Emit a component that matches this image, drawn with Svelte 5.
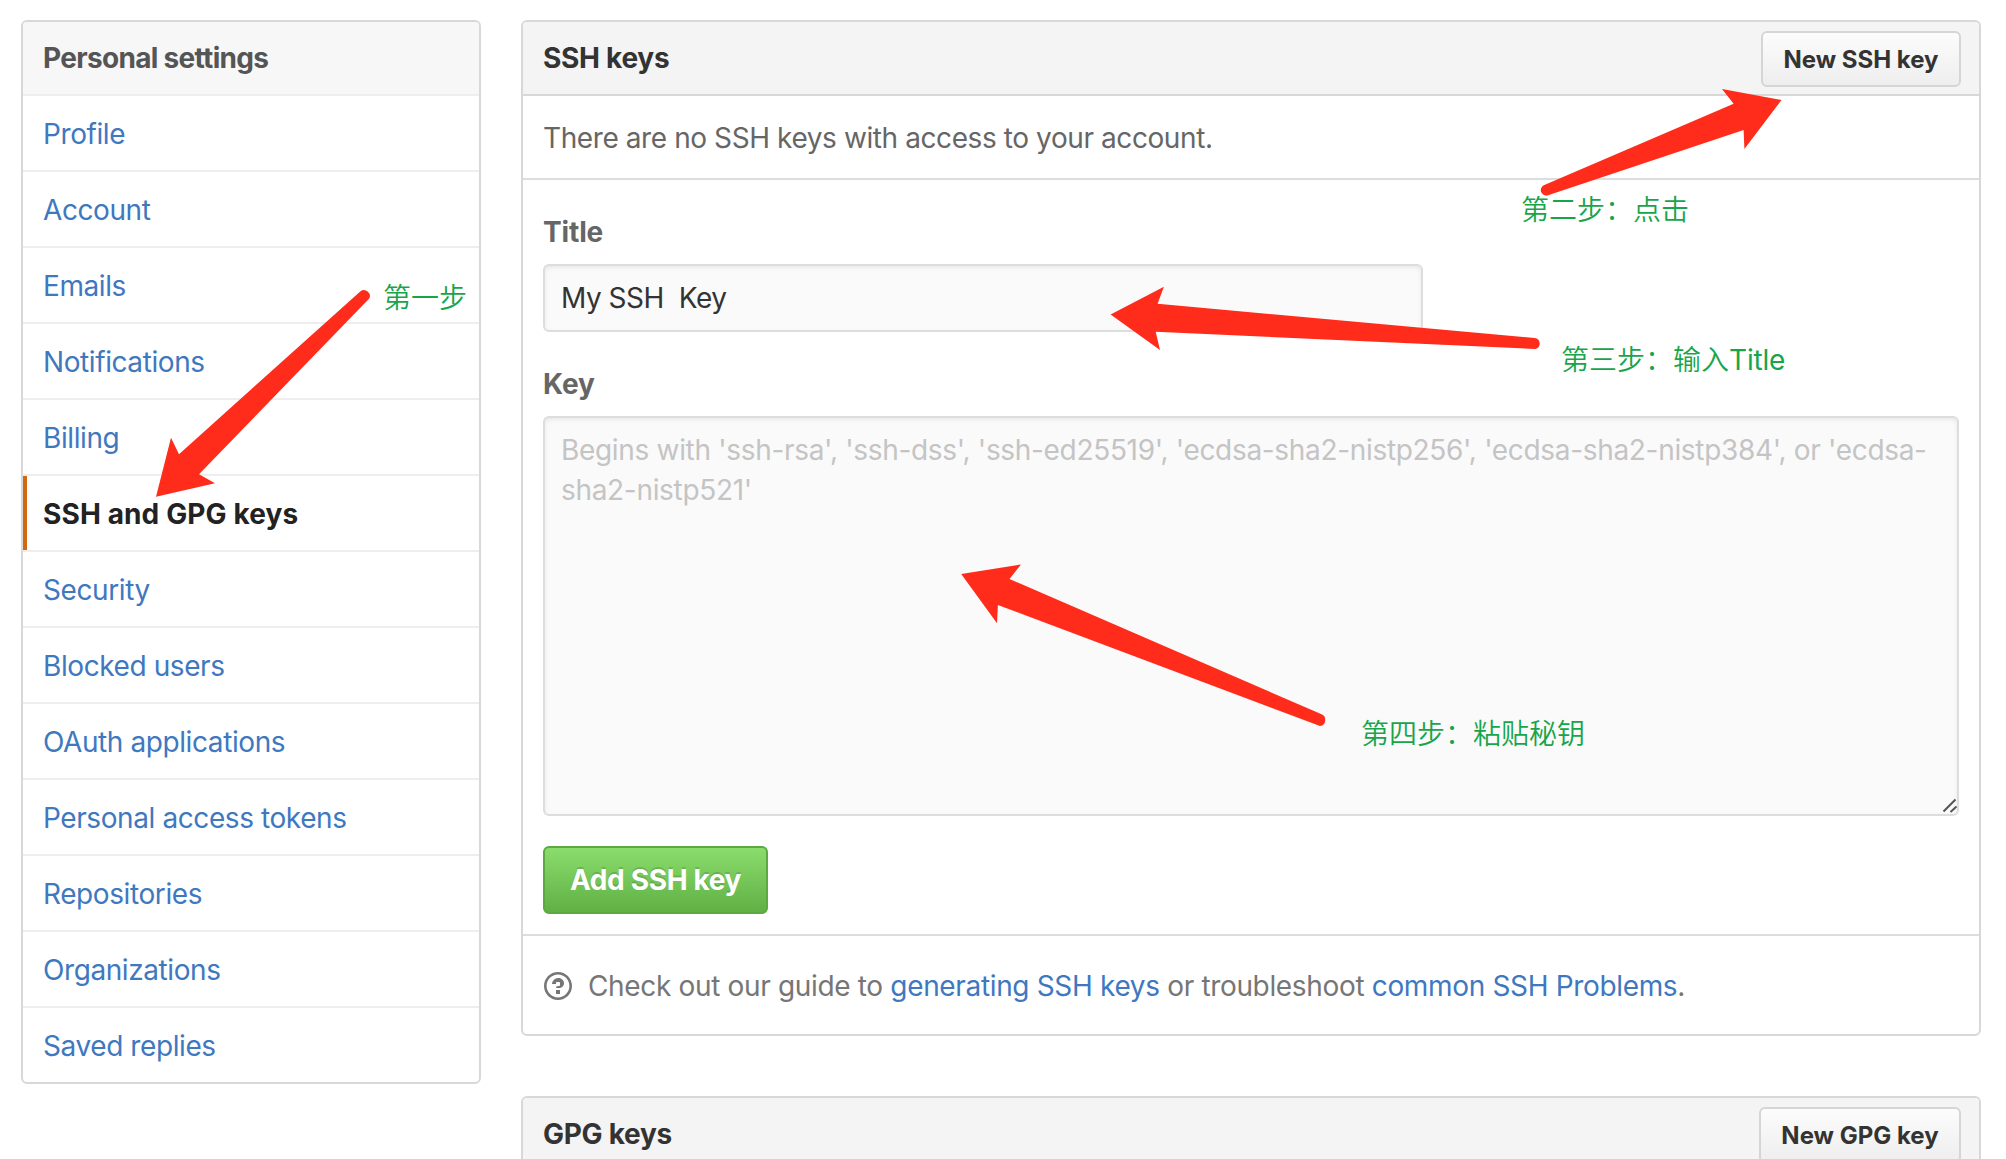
<script>
  const links = [
    'Profile',
    'Account',
    'Emails',
    'Notifications',
    'Billing',
    'SSH and GPG keys',
    'Security',
    'Blocked users',
    'OAuth applications',
    'Personal access tokens',
    'Repositories',
    'Organizations',
    'Saved replies'
  ];
  const current = 'SSH and GPG keys';

  let title = $state('My SSH  Key');
  let key = $state('');

  const arrows = [
    'M156 496.7 L171 437.7 L179 454.2 L360.5 291.2 A6 6 0 0 1 369.3 298.6 L199 474.3 L215 483.3 Z',
    'M1781.5 100 L1722 89 L1733.6 103.7 L1543.8 185.2 A5.5 5.5 0 0 0 1548.8 195 L1743.6 130 L1744.4 149 Z',
    'M1110.6 314.4 L1163.9 286.7 L1157.6 303.8 L1534.5 338 A5.6 5.6 0 0 1 1535.5 349 L1155.7 331.8 L1160 350 Z',
    'M961.2 574 L1021 564.4 L1009.5 579 L1321 714 A6.2 6.2 0 0 1 1320 726 L997.9 605 L997 623.3 Z'
  ];
</script>

<div class="page">
  <nav class="menu">
    <h3 class="menu-heading">Personal settings</h3>
    {#each links as link}
      <a class="menu-item" class:selected={link === current} href="#top">{link}</a>
    {/each}
  </nav>

  <main class="content">
    <section class="box">
      <header class="box-header">
        <h3>SSH keys</h3>
        <button class="btn btn-sm" type="button">New SSH key</button>
      </header>
      <p class="blank">There are no SSH keys with access to your account.</p>
      <form class="form">
        <label class="title-label" for="title">Title</label>
        <input id="title" type="text" bind:value={title} />
        <label class="key-label" for="key">Key</label>
        <div class="key-wrap">
          <textarea
            id="key"
            bind:value={key}
            placeholder="Begins with 'ssh-rsa', 'ssh-dss', 'ssh-ed25519', 'ecdsa-sha2-nistp256', 'ecdsa-sha2-nistp384', or 'ecdsa-sha2-nistp521'"
          ></textarea>
          <svg class="grip" viewBox="0 0 16 16" aria-hidden="true">
            <path d="M1.5 13.5 L13.5 1.5 M8.5 14 L14.5 8.5" />
          </svg>
        </div>
        <button class="btn btn-primary" type="button">Add SSH key</button>
      </form>
      <footer class="help">
        <svg class="question" viewBox="0 0 14 16" aria-hidden="true">
          <path
            fill-rule="evenodd"
            d="M6 10h2v2H6v-2zm4-3.5C10 8.64 8 9 8 9H6c0-.55.45-1 1-1h.5c.28 0 .5-.22.5-.5v-1c0-.28-.22-.5-.5-.5h-1c-.28 0-.5.22-.5.5V7H4c0-1.5 1.5-3 3-3s3 1 3 2.500zM7 2.300c3.140 0 5.700 2.560 5.700 5.700s-2.560 5.700-5.700 5.700A5.710 5.710 0 0 1 1.300 8c0-3.140 2.560-5.700 5.700-5.700zM7 1C3.140 1 0 4.140 0 8s3.140 7 7 7 7-3.140 7-7-3.140-7-7-7z"
          />
        </svg>
        <p>
          Check out our guide to <a href="#top">generating SSH keys</a> or troubleshoot
          <a href="#top">common SSH Problems</a>.
        </p>
      </footer>
    </section>

    <section class="box">
      <header class="box-header">
        <h3>GPG keys</h3>
        <button class="btn btn-sm btn-gpg" type="button">New GPG key</button>
      </header>
    </section>
  </main>

  <svg class="arrows" viewBox="0 0 2006 1159" aria-hidden="true">
    {#each arrows as d}
      <path {d} />
    {/each}
  </svg>
  <span class="note step-1">第一步</span>
  <span class="note step-2">第二步：点击</span>
  <span class="note step-3">第三步：输入<span class="latin">Title</span></span>
  <span class="note step-4">第四步：粘贴秘钥</span>
</div>

<style>
  :global(body) {
    margin: 0;
    background: #fff;
  }

  .page {
    position: relative;
    box-sizing: border-box;
    display: flex;
    align-items: flex-start;
    gap: 40px;
    width: 2006px;
    height: 1159px;
    padding: 20px 25px 0 21px;
    overflow: hidden;
    font: 400 28px/40px Inter, "Liberation Sans", sans-serif;
    letter-spacing: -0.41px;
    color: #666;
  }

  h3,
  p {
    margin: 0;
    font-size: inherit;
  }

  a {
    color: #4078c0;
    text-decoration: none;
  }

  .menu {
    box-sizing: border-box;
    flex: none;
    width: 460px;
    border: 2px solid #d8d8d8;
    border-radius: 6px;
    overflow: hidden;
  }

  .menu-heading,
  .menu-item {
    display: block;
    padding: 18px 20px 16px;
    border-bottom: 2px solid #eee;
  }

  .menu-heading {
    padding: 16px 20px;
    background: #f7f7f7;
    color: #555;
    font-weight: 700;
    letter-spacing: -0.69px;
  }

  .menu-item:last-child {
    border-bottom: 0;
  }

  .menu-item.selected {
    box-shadow: inset 4px 0 0 #d26911;
    color: #222;
    font-weight: 700;
    letter-spacing: 0.12px;
  }

  .content {
    flex: 1;
    display: flex;
    flex-direction: column;
    gap: 60px;
  }

  .box {
    border: 2px solid #d8d8d8;
    border-radius: 6px;
  }

  .box-header {
    box-sizing: border-box;
    display: flex;
    align-items: center;
    justify-content: space-between;
    height: 74px;
    padding: 0 18px 0 20px;
    background: #f4f4f4;
    border-bottom: 2px solid #d8d8d8;
    border-radius: 4px 4px 0 0;
  }

  .box-header h3 {
    color: #333;
    font-weight: 680;
    letter-spacing: -0.28px;
  }

  .btn {
    box-sizing: border-box;
    padding: 0;
    font: 650 24px/40px Inter, "Liberation Sans", sans-serif;
    border: 2px solid #d5d5d5;
    border-radius: 6px;
  }

  .btn-sm {
    width: 200px;
    height: 56px;
    margin-top: 2px;
    color: #333;
    letter-spacing: 0;
    background: linear-gradient(#fcfcfc, #eee);
    padding-top: 1px;
  }

  .btn-gpg {
    width: 202px;
  }

  .btn-primary {
    width: 225px;
    height: 68px;
    font-size: 28px;
    font-weight: 700;
    letter-spacing: -0.35px;
    color: #fff;
    text-shadow: 0 -2px 0 rgba(0, 0, 0, 0.15);
    background: linear-gradient(#8add6d, #60b044);
    border-color: #5ca941;
  }

  .blank {
    padding: 22px 20px 20px;
    border-bottom: 2px solid #ddd;
  }

  .form {
    display: flex;
    flex-direction: column;
    align-items: flex-start;
    padding: 32px 20px 20px;
    border-bottom: 2px solid #ddd;
  }

  label {
    font-weight: 650;
    letter-spacing: -0.15px;
    margin-bottom: 12px;
  }

  .key-label {
    margin-top: 32px;
  }

  input,
  textarea {
    box-sizing: border-box;
    display: block;
    margin: 0;
    border: 2px solid #ddd;
    border-radius: 6px;
    background: #fafafa;
    box-shadow: inset 0 2px 4px rgba(0, 0, 0, 0.075);
    color: #333;
    font: inherit;
    letter-spacing: -0.48px;
    outline: none;
  }

  input {
    width: 880px;
    height: 68px;
    padding: 0 16px;
  }

  .key-wrap {
    position: relative;
    width: 1416px;
  }

  textarea {
    width: 1416px;
    height: 400px;
    padding: 12px 16px;
    letter-spacing: -0.32px;
    resize: none;
  }

  textarea::placeholder {
    color: #c4c4c4;
  }

  .grip {
    position: absolute;
    right: 1px;
    bottom: 2px;
    width: 16px;
    height: 16px;
    fill: none;
    stroke: #555;
    stroke-width: 2;
  }

  .btn-primary {
    margin-top: 30px;
  }

  .help {
    box-sizing: border-box;
    display: flex;
    align-items: center;
    gap: 16px;
    height: 98px;
    padding: 2px 20px 0 21px;
    color: #767676;
    letter-spacing: -0.34px;
  }

  .question {
    width: 28px;
    height: 32px;
    fill: #767676;
  }

  .arrows {
    position: absolute;
    left: 0;
    top: 0;
    width: 2006px;
    height: 1159px;
    fill: #ff2b1b;
    pointer-events: none;
  }

  .note {
    position: absolute;
    color: #18a54a;
    font: 350 28px/40px "Noto Sans CJK SC", sans-serif;
    letter-spacing: 0;
    white-space: nowrap;
  }

  .latin {
    font-family: Inter, sans-serif;
    font-weight: 400;
    letter-spacing: -0.2px;
  }

  .step-1 {
    left: 383px;
    top: 276px;
  }

  .step-2 {
    left: 1521px;
    top: 188px;
  }

  .step-3 {
    left: 1561px;
    top: 338px;
  }

  .step-4 {
    left: 1361px;
    top: 712px;
  }
</style>
